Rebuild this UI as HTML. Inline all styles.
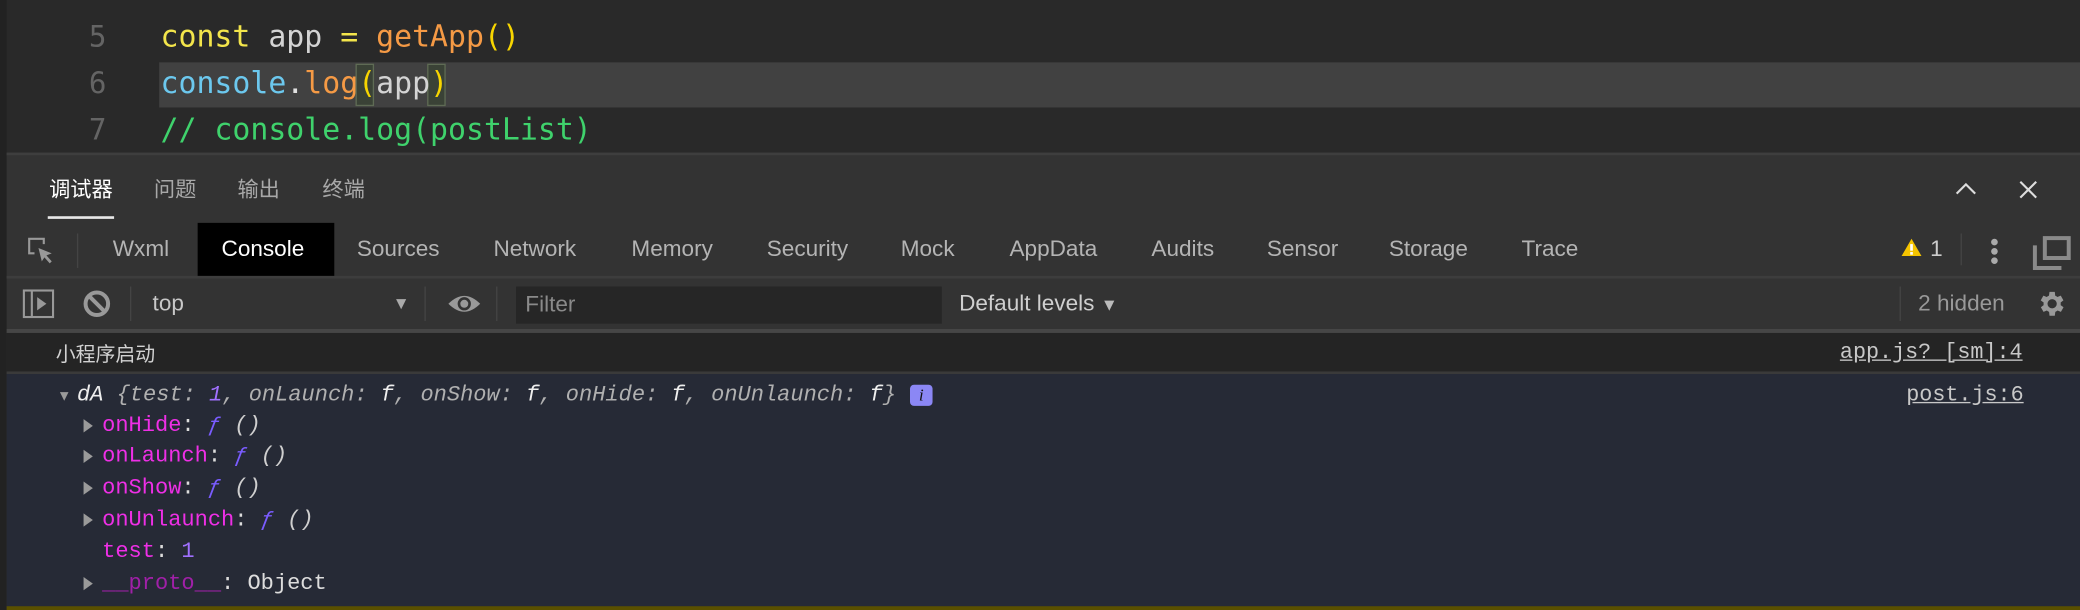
<!DOCTYPE html>
<html><head><meta charset="utf-8"><style>
html,body{margin:0;padding:0;background:#292929;overflow:hidden;width:2080px;height:610px}
#w{position:absolute;left:0;top:0;width:1568px;height:460px;transform:scale(1.32653);transform-origin:0 0;background:#292929;font-family:"Liberation Sans","Noto Sans CJK SC",sans-serif}
.a{position:absolute;white-space:pre}
.code{font-family:"DejaVu Sans Mono","Liberation Mono",monospace;font-size:22.5px;line-height:35px}
.ln{color:#646464;font-family:"DejaVu Sans Mono","Liberation Mono",monospace;font-size:22px;line-height:35px}
.tab{font-size:17px;color:#b4b4b4;top:178px;line-height:20px}
.cn{font-size:16px;color:#a8a8a8;top:134px;line-height:20px}
.m{font-family:"Liberation Mono",monospace;font-size:16.6px;line-height:20px}
.k{color:#ee2fe6}.f{color:#7a5cff;font-style:italic}.p{color:#cfcfcf;font-style:italic}
.tri{position:absolute;width:0;height:0;border-top:5px solid transparent;border-bottom:5px solid transparent;border-left:7px solid #9a9a9a}
</style></head><body><div id="w">
<div class="a" style="left:0;top:0;width:5px;height:460px;background:#222"></div>
<div class="a" style="left:120px;top:47px;width:1448px;height:34px;background:#414141"></div>
<div class="a ln" style="left:67px;top:11px">5</div>
<div class="a ln" style="left:67px;top:46px">6</div>
<div class="a ln" style="left:67px;top:81px">7</div>
<div class="a code" style="left:121px;top:11px"><span style="color:#f3e54b">const</span> <span style="color:#d4d4d4">app</span> <span style="color:#f3e54b">=</span> <span style="color:#f59a45">getApp</span><span style="color:#f7d500">()</span></div>
<div class="a" style="left:268px;top:48px;width:14px;height:32px;background:#3a4236;border:1px solid #5f6b55;box-sizing:border-box"></div>
<div class="a" style="left:322px;top:48px;width:14px;height:32px;background:#3a4236;border:1px solid #5f6b55;box-sizing:border-box"></div>
<div class="a code" style="left:121px;top:46px"><span style="color:#6cc8ee">console</span><span style="color:#e0e0e0">.</span><span style="color:#f59a45">log</span><span style="color:#f7d500">(</span><span style="color:#d4d4d4">app</span><span style="color:#f7d500">)</span></div>
<div class="a code" style="left:121px;top:81px;color:#3fd26c">// console.log(postList)</div>
<div class="a" style="left:5px;top:115px;width:1563px;height:345px;background:#333"></div>
<div class="a" style="left:5px;top:115px;width:1563px;height:2px;background:#3e3e3e"></div>
<div class="a cn" style="left:37px;color:#fff">调试器</div>
<div class="a" style="left:36px;top:163px;width:50px;height:2px;background:#e8e8e8"></div>
<div class="a cn" style="left:116px">问题</div>
<div class="a cn" style="left:179px">输出</div>
<div class="a cn" style="left:243px">终端</div>
<svg class="a" style="left:1474px;top:136px" width="16" height="12"><path d="M1 10 L8 3 L15 10" stroke="#ddd" stroke-width="1.6" fill="none"/></svg>
<svg class="a" style="left:1522px;top:136px" width="14" height="14"><path d="M1 1 L13 13 M13 1 L1 13" stroke="#ddd" stroke-width="1.6"/></svg>
<svg class="a" style="left:20px;top:178px" width="22" height="22"><path d="M6 13 H2 V2 H13 V6" stroke="#999" stroke-width="1.6" fill="none"/><path d="M9 9 L19 13 L15 14.5 L19 19 L17.5 20.5 L13.5 16 L11.5 19 Z" fill="#999"/></svg>
<div class="a" style="left:58px;top:176px;width:1px;height:26px;background:#444"></div>
<div class="a tab" style="left:85px">Wxml</div>
<div class="a" style="left:149px;top:168px;width:103px;height:40px;background:#000"></div>
<div class="a tab" style="left:167px;color:#fff">Console</div>
<div class="a tab" style="left:269px">Sources</div>
<div class="a tab" style="left:372px">Network</div>
<div class="a tab" style="left:476px">Memory</div>
<div class="a tab" style="left:578px">Security</div>
<div class="a tab" style="left:679px">Mock</div>
<div class="a tab" style="left:761px">AppData</div>
<div class="a tab" style="left:868px">Audits</div>
<div class="a tab" style="left:955px">Sensor</div>
<div class="a tab" style="left:1047px">Storage</div>
<div class="a tab" style="left:1147px">Trace</div>
<svg class="a" style="left:1433px;top:179px" width="16" height="15"><path d="M8 1 L15.5 14 H0.5 Z" fill="#f5c400"/><rect x="7" y="5" width="2" height="5" fill="#fff"/><rect x="7" y="11" width="2" height="2" fill="#fff"/></svg>
<div class="a tab" style="left:1455px;color:#ccc">1</div>
<div class="a" style="left:1478px;top:176px;width:1px;height:24px;background:#444"></div>
<div class="a" style="left:1501px;top:180px;width:5px;height:5px;border-radius:50%;background:#aaa"></div>
<div class="a" style="left:1501px;top:187px;width:5px;height:5px;border-radius:50%;background:#aaa"></div>
<div class="a" style="left:1501px;top:194px;width:5px;height:5px;border-radius:50%;background:#aaa"></div>
<svg class="a" style="left:1532px;top:176px" width="30" height="28"><path d="M2 9 V26 H22" stroke="#8a8a8a" stroke-width="3" fill="none"/><rect x="9.5" y="3.5" width="18" height="15" stroke="#8a8a8a" stroke-width="3" fill="none"/></svg>
<div class="a" style="left:5px;top:208px;width:1563px;height:2px;background:#3d3d3d"></div>
<svg class="a" style="left:17px;top:218px" width="24" height="22"><rect x="1" y="1" width="22" height="20" stroke="#999" stroke-width="1.6" fill="none"/><path d="M7 1 V21" stroke="#999" stroke-width="1.6"/><path d="M11 6 L18 11 L11 16 Z" fill="#999"/></svg>
<svg class="a" style="left:62px;top:218px" width="22" height="22"><circle cx="11" cy="11" r="8.5" stroke="#999" stroke-width="3" fill="none"/><path d="M5 5 L17 17" stroke="#999" stroke-width="3"/></svg>
<div class="a" style="left:98px;top:216px;width:1px;height:26px;background:#444"></div>
<div class="a" style="left:115px;top:219px;font-size:17px;color:#c8c8c8">top</div>
<div class="a" style="left:296px;top:221px;font-size:13px;color:#aaa">▼</div>
<div class="a" style="left:320px;top:216px;width:1px;height:26px;background:#444"></div>
<svg class="a" style="left:337px;top:220px" width="26" height="18"><path d="M1 9 Q13 -3 25 9 Q13 21 1 9 Z" fill="#999"/><circle cx="13" cy="9" r="5" fill="#333"/><circle cx="13" cy="9" r="3" fill="#999"/></svg>
<div class="a" style="left:374px;top:216px;width:1px;height:26px;background:#444"></div>
<div class="a" style="left:389px;top:216px;width:321px;height:28px;background:#262626"></div>
<div class="a" style="left:396px;top:220px;font-size:17px;color:#8a8a8a">Filter</div>
<div class="a" style="left:723px;top:219px;font-size:17px;color:#cfcfcf">Default levels <span style="font-size:13px;color:#bbb">▼</span></div>
<div class="a" style="left:1432px;top:216px;width:1px;height:26px;background:#444"></div>
<div class="a" style="left:1446px;top:219px;font-size:17px;color:#999">2 hidden</div>
<svg class="a" style="left:1534px;top:217px" width="24" height="24" viewBox="0 0 24 24"><path fill="#999" d="M19.4 13a7.5 7.5 0 000-2l2.1-1.6-2-3.5-2.5 1a7.6 7.6 0 00-1.7-1L15 3h-4l-.4 2.9a7.6 7.6 0 00-1.7 1l-2.5-1-2 3.5L6.6 11a7.5 7.5 0 000 2l-2.1 1.6 2 3.5 2.5-1a7.6 7.6 0 001.7 1L11 21h4l.4-2.9a7.6 7.6 0 001.7-1l2.5 1 2-3.5zM13 15.5a3.5 3.5 0 110-7 3.5 3.5 0 010 7z"/></svg>
<div class="a" style="left:5px;top:248px;width:1563px;height:3px;background:#464646"></div>
<div class="a" style="left:5px;top:251px;width:1563px;height:29px;background:#242424"></div>
<div class="a" style="left:42px;top:256px;font-size:15px;color:#d2d2d2">小程序启动</div>
<div class="a m" style="left:1387px;top:256px;color:#c8c8c8;text-decoration:underline;font-size:16.4px">app.js? [sm]:4</div>
<div class="a" style="left:5px;top:280px;width:1563px;height:2px;background:#3a3a3a"></div>
<div class="a" style="left:5px;top:282px;width:1563px;height:176px;background:#262a36"></div>
<div class="a" style="left:5px;top:457px;width:1563px;height:3px;background:#5a5000"></div>
<div class="a m" style="left:1437px;top:288px;color:#c8c8c8;text-decoration:underline;font-size:16.4px">post.js:6</div>
<div class="a" style="left:43px;top:293px;font-size:11px;color:#9a9a9a">▼</div>
<div class="a m" style="left:58px;top:288px;font-style:italic;color:#b0b0b0"><span style="color:#eee">dA</span> {test: <span style="color:#a070ff">1</span>, onLaunch: <span style="color:#eee">f</span>, onShow: <span style="color:#eee">f</span>, onHide: <span style="color:#eee">f</span>, onUnlaunch: <span style="color:#eee">f</span>}</div>
<div class="a" style="left:686px;top:290px;width:17px;height:16px;background:#8b87f5;border-radius:3px;color:#111;font:italic 13px 'Liberation Serif',serif;text-align:center;line-height:16px">i</div>
<div class="tri" style="left:63px;top:316px"></div>
<div class="a m" style="left:77px;top:311px"><span class="k">onHide</span><span style="color:#ddd">: </span><span class="f">ƒ</span> <span class="p">()</span></div>
<div class="tri" style="left:63px;top:339px"></div>
<div class="a m" style="left:77px;top:334px"><span class="k">onLaunch</span><span style="color:#ddd">: </span><span class="f">ƒ</span> <span class="p">()</span></div>
<div class="tri" style="left:63px;top:363px"></div>
<div class="a m" style="left:77px;top:358px"><span class="k">onShow</span><span style="color:#ddd">: </span><span class="f">ƒ</span> <span class="p">()</span></div>
<div class="tri" style="left:63px;top:387px"></div>
<div class="a m" style="left:77px;top:382px"><span class="k">onUnlaunch</span><span style="color:#ddd">: </span><span class="f">ƒ</span> <span class="p">()</span></div>
<div class="a m" style="left:77px;top:406px"><span class="k">test</span><span style="color:#ddd">: </span><span style="color:#a070ff">1</span></div>
<div class="tri" style="left:63px;top:435px"></div>
<div class="a m" style="left:77px;top:430px"><span style="color:#a020a8">__proto__</span><span style="color:#ddd">: Object</span></div>
</div></body></html>
